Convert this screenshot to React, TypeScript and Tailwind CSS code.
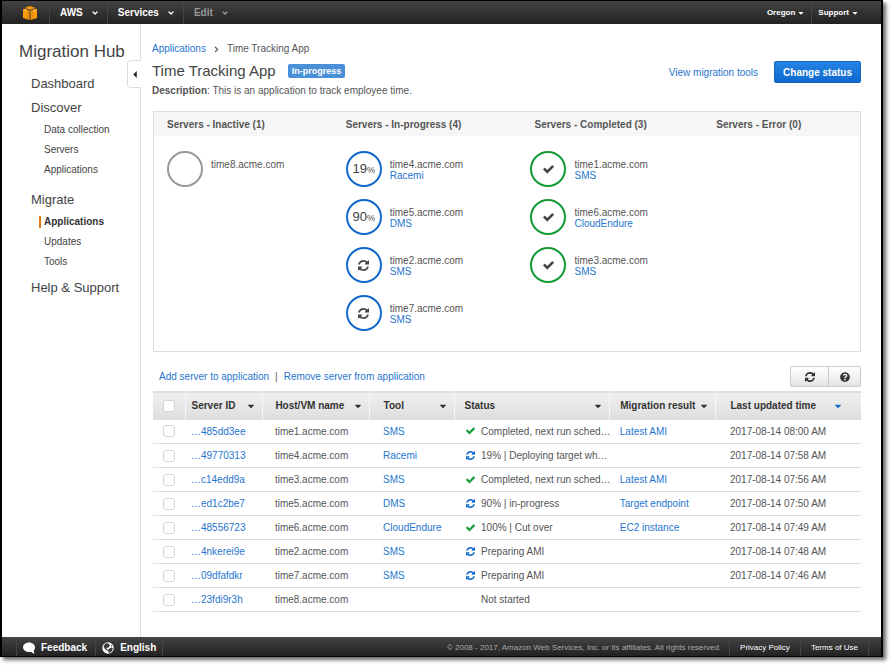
import { clsx } from "clsx";
import { FaCaretDown, FaQuestionCircle } from "react-icons/fa";
import { ChevronDown, ChevronRight } from "lucide-react";

type Status = "done" | "running" | "none";

interface Server {
  id: string;
  host: string;
  tool?: string;
  status: Status;
  text: string;
  progress?: number;
  result?: string;
  updated?: string;
}

const servers: Server[] = [
  { id: "…485dd3ee", host: "time1.acme.com", tool: "SMS", status: "done", text: "Completed, next run sched…", result: "Latest AMI", updated: "2017-08-14 08:00 AM" },
  { id: "…49770313", host: "time4.acme.com", tool: "Racemi", status: "running", progress: 19, text: "19% | Deploying target wh…", updated: "2017-08-14 07:58 AM" },
  { id: "…c14edd9a", host: "time3.acme.com", tool: "SMS", status: "done", text: "Completed, next run sched…", result: "Latest AMI", updated: "2017-08-14 07:56 AM" },
  { id: "…ed1c2be7", host: "time5.acme.com", tool: "DMS", status: "running", progress: 90, text: "90% | in-progress", result: "Target endpoint", updated: "2017-08-14 07:50 AM" },
  { id: "…48556723", host: "time6.acme.com", tool: "CloudEndure", status: "done", text: "100% | Cut over", result: "EC2 instance", updated: "2017-08-14 07:49 AM" },
  { id: "…4nkerei9e", host: "time2.acme.com", tool: "SMS", status: "running", text: "Preparing AMI", updated: "2017-08-14 07:48 AM" },
  { id: "…09dfafdkr", host: "time7.acme.com", tool: "SMS", status: "running", text: "Preparing AMI", updated: "2017-08-14 07:46 AM" },
  { id: "…23fdi9r3h", host: "time8.acme.com", status: "none", text: "Not started" },
];

const columns = [
  { label: "Server ID", width: "w-[11%]", pad: "pl-1.5" },
  { label: "Host/VM name", width: "w-[15%]", pad: "pl-3" },
  { label: "Tool", width: "w-[12%]", pad: "pl-3.5" },
  { label: "Status", width: "w-[22%]", pad: "pl-2.5" },
  { label: "Migration result", width: "w-[15%]", pad: "pl-2.5" },
  { label: "Last updated time", width: "w-auto", pad: "pl-3.5", sorted: true },
];

const groups = [
  { title: "Servers - Inactive (1)", hosts: ["time8"] },
  { title: "Servers - In-progress (4)", hosts: ["time4", "time5", "time2", "time7"] },
  { title: "Servers - Completed (3)", hosts: ["time1", "time6", "time3"], wide: true },
  { title: "Servers - Error (0)", hosts: [] },
];

const link = "text-[#1f75cf]";

const RefreshIcon = ({ className }: { className?: string }) => (
  <svg viewBox="0 0 1536 1536" fill="currentColor" className={className} aria-hidden>
    <path d="M1511 928q0 5-1 7-64 268-268 434.5t-478 166.5q-146 0-282.5-55t-243.5-157l-129 129q-19 19-45 19t-45-19-19-45v-448q0-26 19-45t45-19h448q26 0 45 19t19 45-19 45l-137 137q71 66 161 102t187 36q134 0 250-65t186-179q11-17 53-117 8-23 30-23h192q13 0 22.5 9.500t9.500 22.500zm25-800v448q0 26-19 45t-45 19h-448q-26 0-45-19t-19-45 19-45l138-138q-148-137-349-137-134 0-250 65t-186 179q-11 17-53 117-8 23-30 23h-199q-13 0-22.500-9.500t-9.500-22.500v-7q65-268 270-434.500t480-166.500q146 0 284 55.500t245 156.500l130-129q19-19 45-19t45 19 19 45z" />
  </svg>
);

const CheckIcon = ({ className }: { className?: string }) => (
  <svg viewBox="121 300 1550 1300" fill="currentColor" className={className} aria-hidden>
    <path d="M1671 566q0 40-28 68l-724 724-136 136q-28 28-68 28t-68-28l-136-136-362-362q-28-28-28-68t28-68l136-136q28-28 68-28t68 28l294 295 656-657q28-28 68-28t68 28l136 136q28 28 28 68z" />
  </svg>
);

const CubeLogo = () => (
  <svg viewBox="0 0 28 28" fill="#fb9a0c" className="size-[14px]" aria-hidden>
    <path d="M3 4 14 0l11 4-11 3.500z" />
    <path d="M0 5.500 13 9v19L0 24z" />
    <path d="M28 5.500 15 9v19l13-4z" />
    <path d="M2 5.500 8 7.500v5l-4-1.500zM26 5.500l-6 2v5l4-1.500z" fill="#ffb13d" />
    <path d="M9.500 10v15M18.500 10v15" stroke="#b56a05" strokeWidth="1" />
  </svg>
);

const FeedbackIcon = () => (
  <svg viewBox="0 0 24 24" fill="currentColor" className="size-3" aria-hidden>
    <path d="M12 1C5.400 1 0 5.300 0 10.500S5.400 20 12 20c1.500 0 2.900-.2 4.200-.6C18 21.500 20.500 23 23 23c-1-1.500-1.700-3.600-1.500-5.500C23 15.600 24 13.200 24 10.500 24 5.300 18.600 1 12 1z" />
  </svg>
);

const GlobeIcon = () => (
  <svg viewBox="0 0 24 24" className="size-3" aria-hidden>
    <circle cx="12" cy="12" r="11.500" fill="#fff" />
    <path d="M10 2l4 2 2 3-3 3 1 2-4-1-1 3 3 2-1 2-5-4-3-5 3-5zM13 14l6-3 3 2-3 6-5 3-2-4zM18 5l3 4-3 0z" fill="#3a3a3a" />
  </svg>
);

const menuButton = "flex h-full items-center gap-2 pr-2 pl-2.5 font-bold";

const TopBar = () => (
  <header className="flex h-6 items-center justify-between border-t border-black bg-linear-to-b from-[#444] to-[#222] text-white">
    <div className="flex h-full items-center text-[10px]">
      <a href="#home" aria-label="Home" className="flex h-full w-12 items-center justify-center border-r border-[#444] pl-2">
        <CubeLogo />
      </a>
      <button className={clsx(menuButton, "border-r border-[#444]")}>
        AWS <ChevronDown size={8} strokeWidth={4} />
      </button>
      <button className={clsx(menuButton, "border-r border-[#444]")}>
        Services <ChevronDown size={8} strokeWidth={4} />
      </button>
      <button className={clsx(menuButton, "text-[#999]")}>
        Edit <ChevronDown size={8} strokeWidth={4} />
      </button>
    </div>
    <div className="flex h-full items-center pr-4 text-[8px] font-bold">
      <button className="flex h-full items-center gap-0.5 border-r border-[#444] px-1.5">
        Oregon <FaCaretDown size={8} />
      </button>
      <button className="flex h-full items-center gap-0.5 px-1.5">
        Support <FaCaretDown size={8} />
      </button>
    </div>
  </header>
);

const SubLink = ({ children, active }: { children: string; active?: boolean }) => (
  <a
    href="#nav"
    className={clsx(
      "ml-2 block h-3 border-l-2 pl-[3px] text-[10px] leading-3",
      active ? "border-[#e47911] font-bold text-[#333]" : "border-transparent"
    )}
  >
    {children}
  </a>
);

const Sidebar = () => (
  <aside className="relative w-[139px] shrink-0 border-r border-[#ddd] pt-4 pl-[17px] text-[#444]">
    <h1 className="text-[17px] leading-6">Migration Hub</h1>
    <nav className="pl-3 text-[13px] leading-4">
      <a href="#dashboard" className="mt-3 block">Dashboard</a>
      <a href="#discover" className="mt-2 block">Discover</a>
      <div className="mt-2 flex flex-col gap-2">
        <SubLink>Data collection</SubLink>
        <SubLink>Servers</SubLink>
        <SubLink>Applications</SubLink>
      </div>
      <a href="#migrate" className="mt-4 block">Migrate</a>
      <div className="mt-2 flex flex-col gap-2">
        <SubLink active>Applications</SubLink>
        <SubLink>Updates</SubLink>
        <SubLink>Tools</SubLink>
      </div>
      <a href="#help" className="mt-3 block">Help &amp; Support</a>
    </nav>
    <button
      aria-label="Collapse menu"
      className="absolute top-9 -right-px flex h-7 w-[14px] items-center justify-center rounded-l border border-r-0 border-[#ddd] bg-white"
    >
      <svg viewBox="0 0 4 8" className="h-[7px] w-1" fill="#222"><path d="M4 0v8L0 4z" /></svg>
    </button>
  </aside>
);

const StatusCircle = ({ server: { status, progress } }: { server: Server }) => (
  <div
    className={clsx(
      "flex size-9 shrink-0 items-center justify-center rounded-full border-2 text-[#444]",
      status === "done" && "border-[#129a35]",
      status === "running" && "border-[#0f69cf]",
      status === "none" && "border-[#999]"
    )}
  >
    {progress && (
      <span className="text-[13px]">
        {progress}
        <span className="text-[9px]">%</span>
      </span>
    )}
    {status === "running" && !progress && <RefreshIcon className="size-[11px]" />}
    {status === "done" && <CheckIcon className="h-[9px] w-[11px]" />}
  </div>
);

const StatusPanel = () => (
  <section className="mt-3.5 grid min-h-[241px] grid-cols-[179fr_185fr_186fr_157fr] grid-rows-[24px_1fr] border border-[#ddd]">
    {groups.map(({ title, wide }) => (
      <h3
        key={title}
        className={clsx(
          "bg-[#f6f6f6] text-[10px] leading-[26px] font-bold whitespace-nowrap",
          wide ? "pl-[17px]" : "pl-[13px]"
        )}
      >
        {title}
      </h3>
    ))}
    {groups.map(({ title, hosts }) => (
      <ul key={title} className="flex flex-col gap-3 pt-[15px] pl-[13px]">
        {hosts.map((name) => {
          const server = servers.find((s) => s.host.startsWith(name))!;
          return (
            <li key={name} className="flex gap-2">
              <StatusCircle server={server} />
              <div className="pt-2 text-[10px] leading-[11px]">
                <p>{server.host}</p>
                {server.tool && <a href="#tool" className={link}>{server.tool}</a>}
              </div>
            </li>
          );
        })}
      </ul>
    ))}
  </section>
);

const Checkbox = ({ label }: { label: string }) => (
  <input
    type="checkbox"
    aria-label={label}
    className="mx-auto block size-3 appearance-none rounded-[3px] border border-[#d4d4d4] bg-white"
  />
);

const ServerTable = () => (
  <table className="mt-1 w-full table-fixed text-left text-[10px]">
    <thead className="border-t border-[#ddd] bg-linear-to-b from-[#f0f0f0] to-[#ddd] text-[#333]">
      <tr className="h-7">
        <th className="w-8 border-r border-[#f6f6f6]">
          <Checkbox label="Select all servers" />
        </th>
        {columns.map(({ label, width, pad, sorted }) => (
          <th key={label} className={clsx(width, pad, "border-r border-[#f6f6f6] pr-1.5 last:border-r-0 last:pr-[18px]")}>
            <div className="flex items-center justify-between whitespace-nowrap">
              {label}
              <FaCaretDown size={10} className={clsx(sorted && "text-[#0f69cf]")} />
            </div>
          </th>
        ))}
      </tr>
    </thead>
    <tbody>
      {servers.map((s) => (
        <tr key={s.id} className="h-6 border-b border-[#ddd] whitespace-nowrap">
          <td><Checkbox label={`Select ${s.host}`} /></td>
          <td className="pl-1.5"><a href="#server" className={link}>{s.id}</a></td>
          <td className="pl-3">{s.host}</td>
          <td className="pl-3.5">{s.tool && <a href="#tool" className={link}>{s.tool}</a>}</td>
          <td className="pl-3">
            <span className="flex items-center gap-1.5">
              <span className="w-[9px] shrink-0">
                {s.status === "done" && <CheckIcon className="h-2 w-[9px] text-[#129a35]" />}
                {s.status === "running" && <RefreshIcon className="size-[9px] text-[#0f69cf]" />}
              </span>
              {s.text}
            </span>
          </td>
          <td className="pl-2.5">{s.result && <a href="#result" className={link}>{s.result}</a>}</td>
          <td className="pl-3.5">{s.updated}</td>
        </tr>
      ))}
    </tbody>
  </table>
);

const Footer = () => (
  <footer className="flex h-[19px] items-center justify-between bg-linear-to-b from-[#444] to-[#222] text-white">
    <div className="flex h-full items-center pl-[14px] text-[10px] font-bold">
      <a href="#feedback" className="flex h-full items-center gap-1.5 border-x border-[#444] pt-0.5 pr-2 pl-1.5">
        <FeedbackIcon /> Feedback
      </a>
      <button className="flex h-full items-center gap-1.5 border-r border-[#444] px-1.5 pt-0.5">
        <GlobeIcon /> English
      </button>
    </div>
    <div className="flex h-full items-center pr-3 text-[8px]">
      <p className="pt-0.5 pr-2 text-[#aaa]">© 2008 - 2017, Amazon Web Services, Inc. or its affiliates. All rights reserved.</p>
      <a href="#privacy" className="flex h-full items-center border-l border-[#444] px-2.5 pt-0.5">Privacy Policy</a>
      <a href="#terms" className="flex h-full items-center border-x border-[#444] px-2.5 pt-0.5">Terms of Use</a>
    </div>
  </footer>
);

export default function App() {
  return (
    <div className="min-h-screen bg-white pr-[9px] pb-[10px] font-['Liberation_Sans',Arial,sans-serif] text-[#555]">
      <div className="flex min-h-[calc(100vh-10px)] flex-col border-x-2 border-b border-black bg-white shadow-[3px_3px_4px_rgba(0,0,0,0.6)]">
        <TopBar />
        <div className="flex flex-1">
          <Sidebar />
          <main className="min-w-0 flex-1 pt-[19px] pr-5 pl-[11px]">
            <nav className="flex items-center gap-1.5 text-[10px] leading-3">
              <a href="#applications" className={link}>Applications</a>
              <ChevronRight size={9} strokeWidth={3} />
              <span>Time Tracking App</span>
            </nav>
            <div className="flex items-start justify-between">
              <div>
                <div className="mt-1 flex items-center gap-3">
                  <h2 className="text-[15px] leading-6 text-[#444]">Time Tracking App</h2>
                  <span className="rounded-xs bg-[#4a90d9] px-1 text-[9px] leading-[14px] font-bold text-white">In-progress</span>
                </div>
                <p className="mt-0.5 text-[10px] leading-3">
                  <b>Description</b>: This is an application to track employee time.
                </p>
              </div>
              <div className="flex items-center gap-4 pt-1.5 text-[10px]">
                <a href="#tools" className={link}>View migration tools</a>
                <button className="h-[22px] rounded-xs border border-[#1266bd] bg-linear-to-b from-[#2583e4] to-[#0f69cf] px-2 font-bold text-white">
                  Change status
                </button>
              </div>
            </div>
            <div className="ml-px">
              <StatusPanel />
              <div className="mt-3.5 flex items-center justify-between">
                <div className="flex gap-1.5 pl-1.5 text-[10px]">
                  <a href="#add" className={link}>Add server to application</a>
                  <span>|</span>
                  <a href="#remove" className={link}>Remove server from application</a>
                </div>
                <div className="flex h-[21px] rounded-xs border border-[#ccc] bg-linear-to-b from-white to-[#e4e4e4] text-[#333]">
                  <button aria-label="Refresh" className="flex w-[38px] items-center justify-center border-r border-[#ccc]">
                    <RefreshIcon className="size-[10px]" />
                  </button>
                  <button aria-label="Help" className="flex w-[31px] items-center justify-center">
                    <FaQuestionCircle size={10} />
                  </button>
                </div>
              </div>
              <ServerTable />
            </div>
          </main>
        </div>
        <Footer />
      </div>
    </div>
  );
}
